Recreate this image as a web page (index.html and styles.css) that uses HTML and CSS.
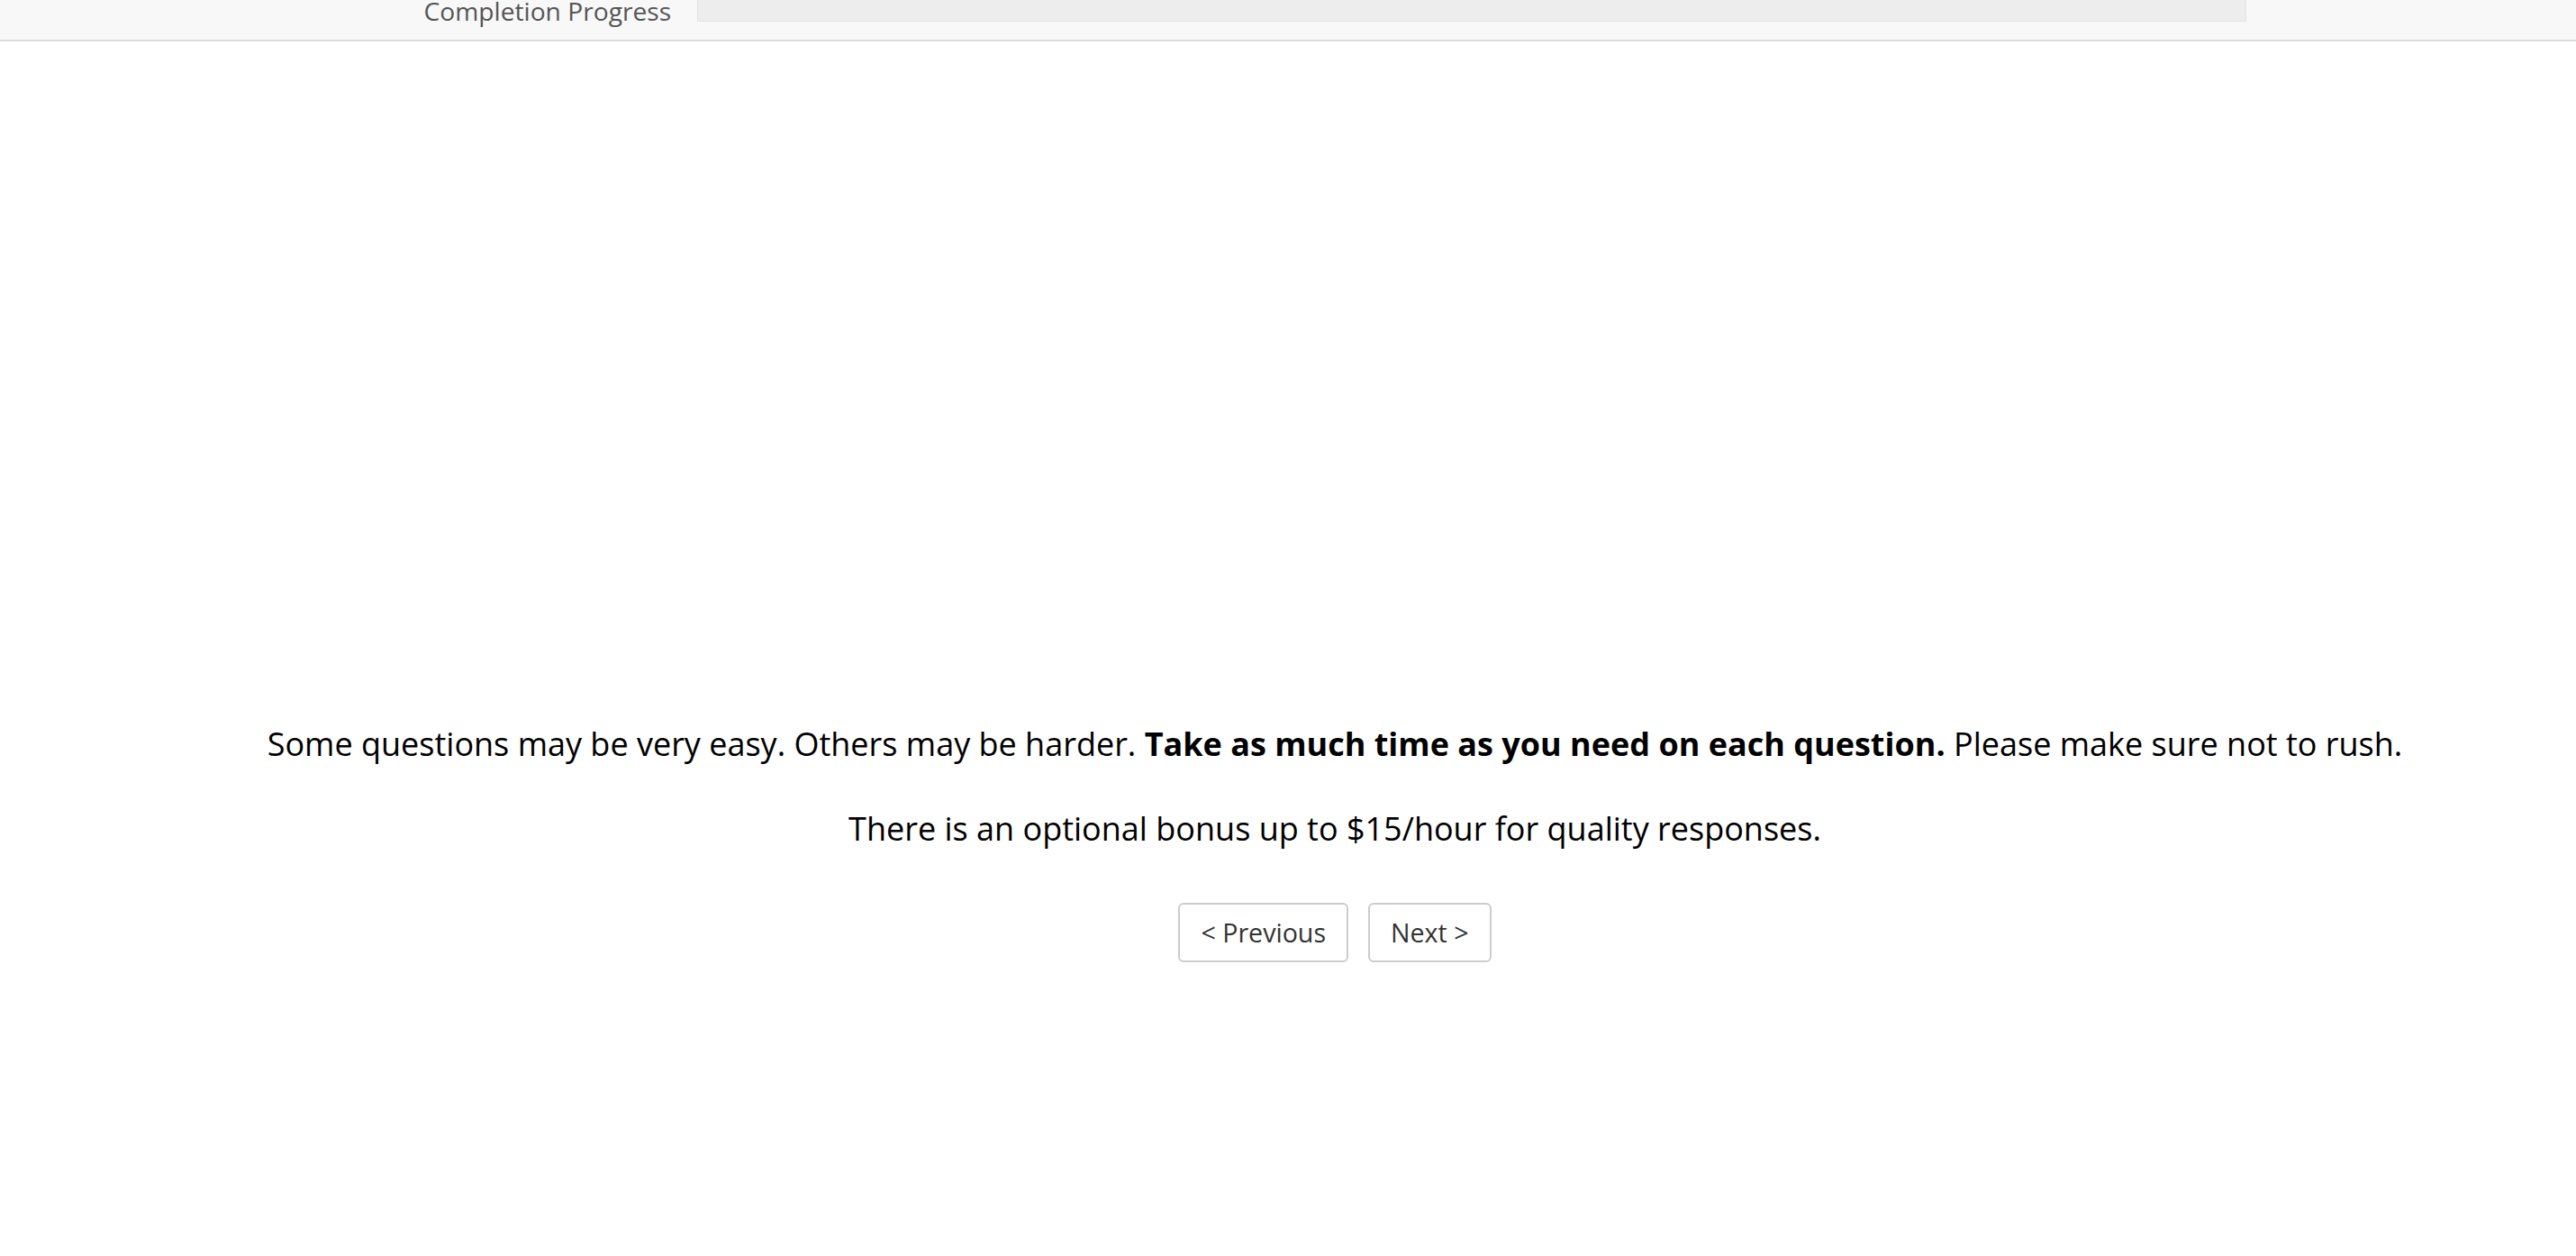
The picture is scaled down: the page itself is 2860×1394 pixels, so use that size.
FILE: index.html
```html
<!DOCTYPE html>
<html lang="en">
<head>
  <meta charset="UTF-8">
  <title>Survey</title>
  <link rel="stylesheet" href="styles.css">
</head>
<body>

  <div class="topbar">
    <div class="topbar-inner">
      <span class="progress-label">Completion Progress</span>
      <div class="progress-track"><div class="progress-fill" style="width:0%"></div></div>
    </div>
  </div>

  <div class="page">
    <div class="question">
      <p>Some questions may be very easy. Others may be harder. <b>Take as much time as you need on each question.</b> Please make sure not to rush.</p>
      <p>There is an optional bonus up to $15/hour for quality responses.</p>
    </div>

    <div class="nav-buttons">
      <button class="btn">&lt; Previous</button>
      <button class="btn">Next &gt;</button>
    </div>
  </div>

</body>
</html>
```

FILE: styles.css
```css
body {
  margin: 0;
  background: #fff;
  color: #000;
  font-family: 'Open Sans', 'Noto Sans', sans-serif;
}

.topbar {
  height: 44px;
  background: #f8f8f8;
  border-bottom: 2px solid #dedede;
  padding-left: 104px;
  overflow: hidden;
}

.topbar-inner {
  width: 2023px;
  margin: 0 auto;
  height: 44px;
  display: flex;
  align-items: flex-end;
  gap: 29px;
  padding-bottom: 20px;
  box-sizing: border-box;
}

.progress-label {
  font-size: 28.2px;
  line-height: 28.2px;
  color: #555;
  white-space: nowrap;
  margin-bottom: -2px;
}

.progress-track {
  flex: 1;
  height: 40px;
  background: #ededed;
  border: 1px solid #e2e2e2;
  box-sizing: border-box;
}

.progress-fill {
  height: 100%;
  background: #5cb85c;
}

.page {
  padding-left: 104px;
  padding-top: 751px;
}

.question {
  text-align: center;
  font-size: 36px;
  line-height: 57.6px;
}

.question p {
  margin: 0 0 36px;
}

.nav-buttons {
  display: flex;
  justify-content: center;
  gap: 22px;
  margin-top: 54px;
}

.btn {
  font-family: 'Open Sans', 'Noto Sans', sans-serif;
  font-size: 28.6px;
  line-height: 40px;
  color: #333;
  background: #fff;
  border: 2px solid #ccc;
  border-radius: 6px;
  padding: 11px 23px;
  cursor: pointer;
}
```
